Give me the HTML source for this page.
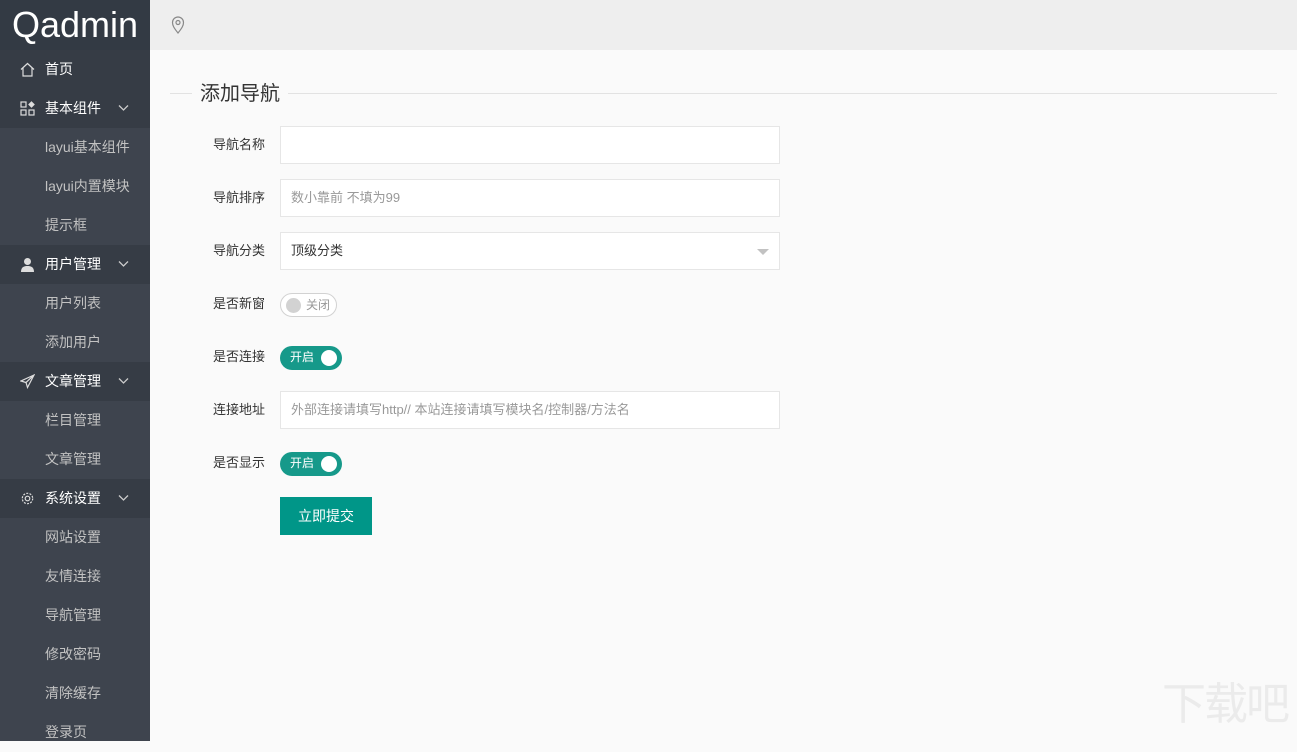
<!DOCTYPE html>
<html><head><meta charset="utf-8"><style>
*{margin:0;padding:0;box-sizing:border-box}
body{width:1297px;height:741px;overflow:hidden;background:#fafafa;font-family:"Liberation Sans","Noto Sans CJK SC",sans-serif;position:relative}
.side{position:absolute;left:0;top:0;width:150px;height:741px;background:#3e444e}
.logo{height:50px;background:#333a44;color:#fff;font-size:36px;line-height:50px;padding-left:12px}
.row{height:39px;line-height:39px;font-size:14px;position:relative}
.p{background:#363c45;color:#fff;padding-left:45px}
.c{color:#c2c2c2;padding-left:45px}
.ic{position:absolute;left:20px;top:12px;width:15px;height:15px}
.ar{position:absolute;left:118px;top:15px}
.top{position:absolute;left:150px;top:0;right:0;height:50px;background:#eee}
.legend{position:absolute;left:170px;top:93px;width:1107px;border-top:1px solid #e2e2e2}
.legend span{position:absolute;left:22px;top:-12px;background:#fafafa;padding:0 8px;font-size:20px;color:#333;line-height:24px}
.lab{position:absolute;left:170px;width:95px;text-align:right;font-size:13px;color:#333}
.inp{position:absolute;left:280px;width:500px;height:38px;background:#fff;border:1px solid #e6e6e6;font-size:13px;color:#999;line-height:36px;padding-left:10px}
.sw{position:absolute;left:280px;height:24px;border-radius:12px;font-size:12px;line-height:22px}
.on{width:62px;background:#16998a;color:#fff;padding-left:10px}
.on i{position:absolute;right:5px;top:4px;width:16px;height:16px;border-radius:50%;background:#fff}
.off{width:57px;background:#fff;border:1px solid #d2d2d2;color:#999;padding-left:25px}
.off i{position:absolute;left:5px;top:4px;width:15px;height:15px;border-radius:50%;background:#d2d2d2}
.btn{position:absolute;left:280px;top:497px;width:92px;height:38px;background:#009688;color:#fff;font-size:14px;text-align:center;line-height:38px}
</style></head><body>
<div class="side">
<div class="logo">Qadmin</div>
<div class="row p"><svg class="ic" viewBox="0 0 15 15" fill="none" stroke="#ddd" stroke-width="1.2"><path d="M1 7.5L7.5 1.5 14 7.5M3 6v8h9V6"/></svg>首页</div>
<div class="row p"><svg class="ic" viewBox="0 0 15 15" fill="none" stroke="#ddd" stroke-width="1.2"><rect x="1" y="1" width="5" height="5"/><rect x="1" y="9" width="5" height="5"/><rect x="9" y="9" width="5" height="5"/><path d="M11.5 1l2.5 2.5-2.5 2.5-2.5-2.5z" fill="#ddd"/></svg>基本组件<svg class="ar" width="11" height="8" viewBox="0 0 11 8" fill="none" stroke="#ccc" stroke-width="1.3"><path d="M1 1.5l4.5 4.5 4.5-4.5"/></svg></div>
<div class="row c">layui基本组件</div>
<div class="row c">layui内置模块</div>
<div class="row c">提示框</div>
<div class="row p"><svg class="ic" viewBox="0 0 15 15" fill="#ddd"><circle cx="7.5" cy="4.5" r="3.5"/><path d="M1 15c0-5 3-6 6.5-6s6.5 1 6.5 6z"/></svg>用户管理<svg class="ar" width="11" height="8" viewBox="0 0 11 8" fill="none" stroke="#ccc" stroke-width="1.3"><path d="M1 1.5l4.5 4.5 4.5-4.5"/></svg></div>
<div class="row c">用户列表</div>
<div class="row c">添加用户</div>
<div class="row p"><svg class="ic" viewBox="0 0 15 15" fill="none" stroke="#ddd" stroke-width="1.2"><path d="M14 1L1 7l5 1.5 1.5 5zM6 8.5L14 1"/></svg>文章管理<svg class="ar" width="11" height="8" viewBox="0 0 11 8" fill="none" stroke="#ccc" stroke-width="1.3"><path d="M1 1.5l4.5 4.5 4.5-4.5"/></svg></div>
<div class="row c">栏目管理</div>
<div class="row c">文章管理</div>
<div class="row p"><svg class="ic" viewBox="0 0 15 15" fill="none" stroke="#ddd" stroke-width="1.2"><circle cx="7.5" cy="7.5" r="2.3"/><circle cx="7.5" cy="7.5" r="5.2" stroke-dasharray="2 1.3"/></svg>系统设置<svg class="ar" width="11" height="8" viewBox="0 0 11 8" fill="none" stroke="#ccc" stroke-width="1.3"><path d="M1 1.5l4.5 4.5 4.5-4.5"/></svg></div>
<div class="row c">网站设置</div>
<div class="row c">友情连接</div>
<div class="row c">导航管理</div>
<div class="row c">修改密码</div>
<div class="row c">清除缓存</div>
<div class="row c">登录页</div>
</div>
<div class="top"><svg style="position:absolute;left:21px;top:16px" width="14" height="18" viewBox="0 0 14 18" fill="none" stroke="#888" stroke-width="1.2"><path d="M7 17C3 12 1.5 9.5 1.5 6.5a5.5 5.5 0 0 1 11 0C12.5 9.5 11 12 7 17z"/><circle cx="7" cy="6.5" r="2"/></svg></div>
<div class="legend"><span>添加导航</span></div>
<div class="lab" style="top:134px">导航名称</div>
<div class="inp" style="top:126px"></div>
<div class="lab" style="top:187px">导航排序</div>
<div class="inp" style="top:179px">数小靠前 不填为99</div>
<div class="lab" style="top:240px">导航分类</div>
<div class="inp" style="top:232px;color:#333">顶级分类<span style="position:absolute;right:10px;top:16px;border:6px solid transparent;border-top:6px solid #c2c2c2;border-bottom:0"></span></div>
<div class="lab" style="top:293px">是否新窗</div>
<div class="sw off" style="top:293px"><i></i>关闭</div>
<div class="lab" style="top:346px">是否连接</div>
<div class="sw on" style="top:346px"><i></i>开启</div>
<div class="lab" style="top:399px">连接地址</div>
<div class="inp" style="top:391px">外部连接请填写http// 本站连接请填写模块名/控制器/方法名</div>
<div class="lab" style="top:452px">是否显示</div>
<div class="sw on" style="top:452px"><i></i>开启</div>
<div class="btn">立即提交</div>
<div style="position:absolute;left:1162px;top:680px;font-size:44px;color:#ebebeb;letter-spacing:-2px;line-height:50px">下载吧</div>
</body></html>
